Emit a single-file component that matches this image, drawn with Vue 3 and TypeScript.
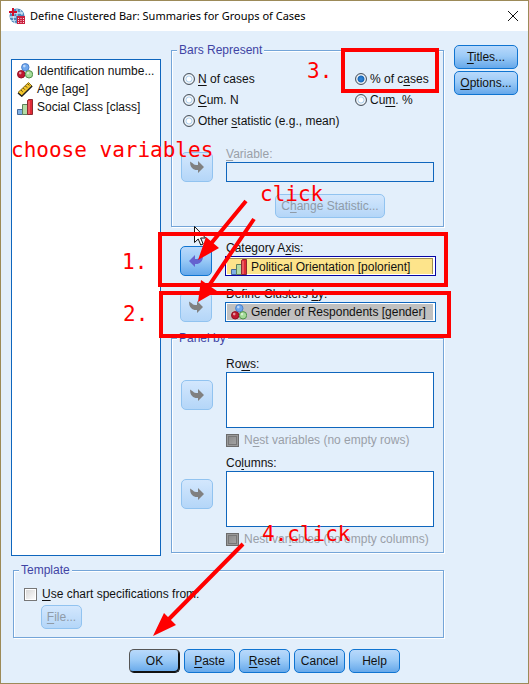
<script setup lang="ts">
import { ref } from 'vue'
import { h, type FunctionalComponent } from 'vue'

type Measure = 'nominal' | 'scale' | 'ordinal'
interface Variable { name: string; measure: Measure }
interface Mnemonic { id: string; pre: string; key: string; post: string }

const variables: Variable[] = [
  { name: 'Identification numbe...', measure: 'nominal' },
  { name: 'Age [age]', measure: 'scale' },
  { name: 'Social Class [class]', measure: 'ordinal' },
]

const statistics: Mnemonic[] = [
  { id: 'n', pre: '', key: 'N', post: ' of cases' },
  { id: 'pct', pre: '% of c', key: 'a', post: 'ses' },
  { id: 'cumn', pre: '', key: 'C', post: 'um. N' },
  { id: 'cumpct', pre: 'Cu', key: 'm', post: '. %' },
  { id: 'other', pre: 'Other ', key: 's', post: 'tatistic (e.g., mean)' },
]

const targets = [
  { id: 'axis', pre: 'Category A', key: 'x', post: 'is:', variable: 'Political Orientation [polorient]', measure: 'ordinal' as Measure, active: true },
  { id: 'clusters', pre: 'Define Clusters ', key: 'b', post: 'y:', variable: 'Gender of Respondents [gender]', measure: 'nominal' as Measure, active: false },
]

const panels = [
  { id: 'rows', pre: 'Ro', key: 'w', post: 's:', nest: ['N', 'e', 'st variables (no empty rows)'] },
  { id: 'columns', pre: 'Co', key: 'l', post: 'umns:', nest: ['Nest var', 'i', 'ables (no empty columns)'] },
]

const actions: Mnemonic[] = [
  { id: 'ok', pre: 'OK', key: '', post: '' },
  { id: 'paste', pre: '', key: 'P', post: 'aste' },
  { id: 'reset', pre: '', key: 'R', post: 'eset' },
  { id: 'cancel', pre: 'Cancel', key: '', post: '' },
  { id: 'help', pre: 'Help', key: '', post: '' },
]

const statistic = ref('pct')
const useTemplate = ref(false)

const ball = (cx: number, cy: number, fill: string, stroke: string) => [
  h('circle', { cx, cy, r: 3.7, fill, stroke }),
  h('circle', { cx: cx - 1, cy: cy - 1.2, r: 1.3, fill: '#fff', opacity: 0.55 }),
]

const MeasureIcon: FunctionalComponent<{ kind: Measure }> = (props) => {
  const shapes = {
    nominal: () => [
      ...ball(8.3, 4.3, '#6fa8ee', '#4a7fca'),
      ...ball(4.2, 11.3, '#c0182f', '#8f1024'),
      ...ball(12, 11.3, '#a5dc98', '#4f8f4a'),
    ],
    scale: () => [
      h('path', { d: 'M1 11.5 11.5 1.5 15 5 4.8 15Z', fill: '#f4c62c', stroke: '#8a6d14' }),
      h('path', { d: 'M4.2 9.3l1.4 1.4M6.4 7.2l1.4 1.4M8.6 5.1l1.4 1.4M10.8 3l1.4 1.4', stroke: '#3c3210' }),
      h('path', { d: 'M1 12 4.8 15.2 15.2 5', stroke: '#222', 'stroke-width': 1.4 }),
    ],
    ordinal: () => [
      h('path', { d: 'M.5 10.5h5v5h-5z', fill: '#7fb0e4', stroke: '#46699a' }),
      h('path', { d: 'M5.5 5.5h5v10h-5z', fill: '#b4dca6', stroke: '#5d7f5a' }),
      h('path', { d: 'M10.5 1.5l1-1h4v15h-5z', fill: '#e02a36', stroke: '#8d2a30' }),
      h('path', { d: 'M12 2v13', stroke: '#f58a8c' }),
    ],
  }
  return h('svg', { viewBox: '0 0 16 16', width: 16, height: 16, fill: 'none', 'aria-hidden': 'true' }, shapes[props.kind]())
}
MeasureIcon.props = ['kind']

const MoveArrow: FunctionalComponent = () =>
  h('svg', { viewBox: '0 0 14 12', width: 14, height: 12, 'aria-hidden': 'true' }, [
    h('path', { d: 'M0 .5 3 2.500Q4 4 8 4V0L14 6 8 12V9H5.500Q0 8 0 .5Z', fill: 'currentColor' }),
  ])
</script>

<template>
  <main class="dialog">
    <header class="titlebar">
      <svg class="app-icon" viewBox="0 0 16 16" width="16" height="16" aria-hidden="true">
        <circle cx="8" cy="8" r="7.500" fill="#4f88bd" />
        <path d="M2 4h12v2H2zM1 8h6v2H1zM2 12h5v1H2z" fill="#a9cde8" />
        <path d="M8 1v7M5 6C4 9 4 12 6 15M11 2c1 2 2 3 2 5" fill="none" stroke="#dcecf7" />
        <path d="M3 0h2v3h3v2H5v3H3V5H0V3h3z" fill="#d0102c" />
        <path d="M8 8h8v8H8z" fill="#c9203f" />
        <path d="M9 10h1v1H9zM11.500 10h1v1h-1zM14 10h1v1h-1zM9 12h1v1H9zM11.500 12h1v1h-1zM14 12h1v1h-1zM9 14h1v1H9zM11.500 14h1v1h-1zM14 14h1v1h-1z" fill="#fbdde2" />
      </svg>
      <h1>Define Clustered Bar: Summaries for Groups of Cases</h1>
      <button class="close" type="button" aria-label="Close">
        <svg viewBox="0 0 10 10" width="10" height="10" aria-hidden="true"><path d="M0 0 10 10M10 0 0 10" stroke="#111" /></svg>
      </button>
    </header>

    <form class="content" @submit.prevent>
      <ul class="variables" role="listbox" aria-label="Variables" tabindex="0">
        <li v-for="v in variables" :key="v.name" role="option" aria-selected="false">
          <MeasureIcon :kind="v.measure" />{{ v.name }}
        </li>
      </ul>

      <div class="settings">
        <fieldset class="group represent">
          <legend>Bars Represent</legend>
          <div class="stats">
            <label v-for="s in statistics" :key="s.id" :class="{ wide: s.id === 'other' }">
              <input v-model="statistic" type="radio" name="statistic" :value="s.id" />
              <span>{{ s.pre }}<u>{{ s.key }}</u>{{ s.post }}</span>
            </label>
          </div>
          <div class="transfer stat-variable">
            <button class="btn move" type="button" disabled aria-label="Move to Variable"><MoveArrow /></button>
            <div class="field">
              <label class="off" for="variable"><u>V</u>ariable:</label>
              <input id="variable" type="text" disabled />
            </div>
          </div>
          <div class="transfer change">
            <button class="btn" type="button" disabled>C<u>h</u>ange Statistic...</button>
          </div>
        </fieldset>

        <div class="targets">
          <div v-for="t in targets" :key="t.id" class="transfer">
            <button class="btn move" :class="{ back: t.active }" type="button" :disabled="!t.active" :aria-label="'Move ' + t.variable">
              <MoveArrow />
            </button>
            <div class="field">
              <span :id="t.id" class="caption">{{ t.pre }}<u>{{ t.key }}</u>{{ t.post }}</span>
              <ul class="target" :class="{ active: t.active }" role="listbox" :aria-labelledby="t.id" tabindex="0">
                <li role="option" :aria-selected="t.active"><MeasureIcon :kind="t.measure" />{{ t.variable }}</li>
              </ul>
            </div>
          </div>
        </div>

        <fieldset class="group panel">
          <legend>Panel by</legend>
          <div v-for="p in panels" :key="p.id" class="transfer">
            <button class="btn move" type="button" disabled :aria-label="'Move to ' + p.id"><MoveArrow /></button>
            <div class="field">
              <label :for="p.id">{{ p.pre }}<u>{{ p.key }}</u>{{ p.post }}</label>
              <textarea :id="p.id" readonly></textarea>
              <label class="check off">
                <input type="checkbox" disabled />
                <span>{{ p.nest[0] }}<u>{{ p.nest[1] }}</u>{{ p.nest[2] }}</span>
              </label>
            </div>
          </div>
        </fieldset>
      </div>

      <div class="side">
        <button class="btn" type="button"><u>T</u>itles...</button>
        <button class="btn" type="button"><u>O</u>ptions...</button>
      </div>

      <fieldset class="group template">
        <legend>Template</legend>
        <label class="check">
          <input v-model="useTemplate" type="checkbox" />
          <span><u>U</u>se chart specifications from:</span>
        </label>
        <button class="btn file" type="button" :disabled="!useTemplate"><u>F</u>ile...</button>
      </fieldset>

      <footer class="actions">
        <button v-for="a in actions" :key="a.id" class="btn" :class="{ default: a.id === 'ok' }" type="button">
          {{ a.pre }}<u v-if="a.key">{{ a.key }}</u>{{ a.post }}
        </button>
      </footer>
    </form>

    <div class="notes">
      <svg class="pointer" viewBox="0 0 12 20" width="12" height="20" aria-hidden="true">
        <path d="M.5.5v16l3.700-3.500 2.600 6 2.400-1-2.600-6h5z" fill="#fff" stroke="#111" />
      </svg>
      <i class="frame frame-axis"></i>
      <i class="frame frame-clusters"></i>
      <i class="frame frame-percent"></i>
      <svg class="arrows" width="529" height="684" aria-hidden="true">
        <g fill="none" stroke="#f00" stroke-width="4">
          <path d="M246 201 209 246M254 219 206 290M243 544 168 620" />
        </g>
        <path d="M198 260 206 237 219 248ZM198 302 201 280 217 291ZM153 636 164 613 176 625Z" fill="#f00" />
      </svg>
      <span class="note choose">choose variables</span>
      <span class="note click">click</span>
      <span class="note one">1.</span>
      <span class="note two">2.</span>
      <span class="note three">3.</span>
      <span class="note four">4.click</span>
    </div>
  </main>
</template>

<style>
body {
  background: #e3effb;
}
</style>

<style scoped>
* {
  box-sizing: border-box;
}
.dialog {
  position: relative;
  min-height: 100vh;
  overflow: hidden;
  border: 1px solid #9c8a58;
  background: #e3effb;
  color: #111;
  font: 12px/16px "Liberation Sans", Arial, sans-serif;
}
.titlebar {
  display: flex;
  align-items: center;
  gap: 5px;
  height: 30px;
  padding: 0 10px 0 8px;
  background: #fff;
}
.titlebar h1 {
  flex: 1;
  margin: 0;
  font: 11px/16px "Noto Sans", "Open Sans", sans-serif;
  color: #000;
  white-space: nowrap;
}
.close {
  display: flex;
  padding: 0;
  border: 0;
  background: none;
}
.content {
  display: grid;
  grid-template-columns: 150px minmax(0, 1fr) 64px;
  column-gap: 10px;
  padding: 12px 10px 10px;
}
ul {
  margin: 0;
  padding: 0;
  list-style: none;
}
li {
  display: flex;
  align-items: center;
  gap: 4px;
  white-space: nowrap;
}
li svg {
  flex: none;
}
u {
  text-decoration: underline 1px;
  text-underline-offset: 2px;
}
.variables {
  margin-top: 16px;
  padding: 2px 5px;
  border: 1px solid #0f66bd;
  background: #fff;
}
.variables li {
  height: 18px;
}
.settings {
  padding-bottom: 3px;
}
.group {
  min-width: 0;
  margin: 0;
  padding: 0 9px;
  border: 1px solid #74a5d8;
  box-shadow: 1px 1px 0 #fff, inset 1px 1px 0 #fff;
}
legend {
  margin-left: -4px;
  padding: 0 2px;
  background: #e3effb;
  color: #3f44a4;
  line-height: 15px;
}
.represent {
  padding-bottom: 8px;
}
.stats {
  display: grid;
  grid-template-columns: 172px 1fr;
  grid-auto-rows: 21px;
  padding: 10px 0 0 2px;
}
.stats label {
  display: flex;
  align-items: center;
  gap: 3px;
  white-space: nowrap;
}
.stats .wide {
  grid-column: 1 / -1;
}
input[type="radio"] {
  appearance: none;
  width: 12px;
  height: 12px;
  margin: 0;
  border: 1px solid #4b5560;
  border-radius: 50%;
  background: radial-gradient(circle, #fff 0 2px, #a9cdec 3px, #fff 4px, #c4ccd4 5px);
}
input[type="radio"]:checked {
  background: radial-gradient(circle, #2f83d6 0 1px, #1767b8 3px, #fff 4px, #c4ccd4 5px);
}
.transfer {
  display: grid;
  grid-template-columns: 32px minmax(0, 1fr);
  column-gap: 13px;
  align-items: end;
}
.field {
  display: grid;
}
.stat-variable {
  margin-top: 15px;
}
.field input[type="text"] {
  width: 100%;
  height: 20px;
  border: 1px solid #0f66bd;
  background: #e3effb;
}
.off {
  color: #9aa0a8;
}
.change {
  margin-top: 12px;
}
.change .btn {
  grid-column: 2;
  justify-self: center;
  padding: 0 5px;
}
.btn {
  height: 24px;
  padding: 0;
  border: 1px solid #0f74d1;
  border-radius: 5px;
  background: linear-gradient(#b9d9fb, #9ccbf7 45%, #66a8ea);
  color: #111;
  font: inherit;
  white-space: nowrap;
}
.btn:disabled {
  border-color: #91c3f0;
  background: linear-gradient(#d3e7fd, #b4d6f8);
  color: #8f9ba8;
}
.btn.move {
  display: flex;
  align-items: center;
  justify-content: center;
  height: 30px;
}
.btn.move:disabled {
  color: #808080;
}
.btn.back {
  color: #6562cf;
}
.btn.back svg {
  transform: scaleX(-1);
}
.targets {
  display: grid;
  gap: 10px;
  padding: 13px 8px 9px 9px;
}
.caption {
  padding-left: 1px;
}
.target {
  height: 20px;
  padding: 1px;
  border: 1px solid #0f66bd;
  background: #fff;
}
.target li {
  height: 16px;
  margin-right: 1px;
  padding-left: 4px;
  background: #c0c0c0;
}
.target.active {
  border-color: #0505a5;
}
.target.active li {
  border-top: 1px solid #a08f50;
  border-right: 1px solid #a08f50;
  background: #fde48b;
}
.panel {
  display: block;
  padding-bottom: 4px;
}
.panel .transfer {
  align-items: start;
  padding-top: 6px;
}
.panel legend + .transfer {
  padding-top: 10px;
}
.panel .move {
  margin-top: 24px;
}
textarea {
  display: block;
  width: 100%;
  height: 56px;
  resize: none;
  border: 1px solid #0f66bd;
  background: #fff;
  font: inherit;
}
.check {
  display: flex;
  align-items: center;
  gap: 5px;
  height: 18px;
  white-space: nowrap;
}
.field .check {
  margin-top: 3px;
}
input[type="checkbox"] {
  appearance: none;
  flex: none;
  width: 13px;
  height: 13px;
  margin: 0;
  border: 1px solid #777;
  background: linear-gradient(135deg, #d4d4d4, #fff);
  box-shadow: inset 0 0 0 1px #fff;
}
input[type="checkbox"]:disabled {
  border-color: #6c6c6c;
  background: linear-gradient(135deg, #868686, #a8a8a8);
  box-shadow: inset 0 0 0 1px #999, inset 0 0 0 2px #777;
}
.side {
  display: flex;
  flex-direction: column;
  gap: 2px;
  padding-top: 2px;
}
.template {
  grid-column: 1 / 3;
  margin: 7px 0 0 2px;
  padding: 0 10px 8px;
}
.template legend {
  margin-left: -5px;
}
.template .check {
  margin-top: 7px;
}
.file {
  display: block;
  width: 41px;
  margin: 2px 0 0 17px;
}
.actions {
  grid-column: 1 / -1;
  display: flex;
  justify-content: center;
  gap: 4px;
  margin-top: 11px;
}
.actions .btn {
  width: 51px;
}
.btn.default {
  border-color: #555 #111 #111 #555;
  box-shadow: inset -1px -1px 0 #111;
}
.notes {
  position: absolute;
  inset: -1px;
  pointer-events: none;
}
.arrows {
  position: absolute;
  top: 0;
  left: 0;
}
.pointer {
  position: absolute;
  top: 226px;
  left: 194px;
}
.frame {
  position: absolute;
  border: 4px solid #f00;
}
.frame-axis {
  top: 232px;
  left: 158px;
  width: 290px;
  height: 55px;
}
.frame-clusters {
  top: 291px;
  left: 159px;
  width: 292px;
  height: 47px;
}
.frame-percent {
  top: 48px;
  left: 341px;
  width: 98px;
  height: 45px;
}
.note {
  position: absolute;
  color: #f00;
  font: 21px/24px "DejaVu Sans Mono", "Liberation Mono", monospace;
  white-space: nowrap;
}
.choose {
  top: 138px;
  left: 11px;
}
.click {
  top: 182px;
  left: 260px;
}
.one {
  top: 250px;
  left: 122px;
}
.two {
  top: 302px;
  left: 123px;
}
.three {
  top: 59px;
  left: 307px;
}
.four {
  top: 522px;
  left: 262px;
}
</style>
